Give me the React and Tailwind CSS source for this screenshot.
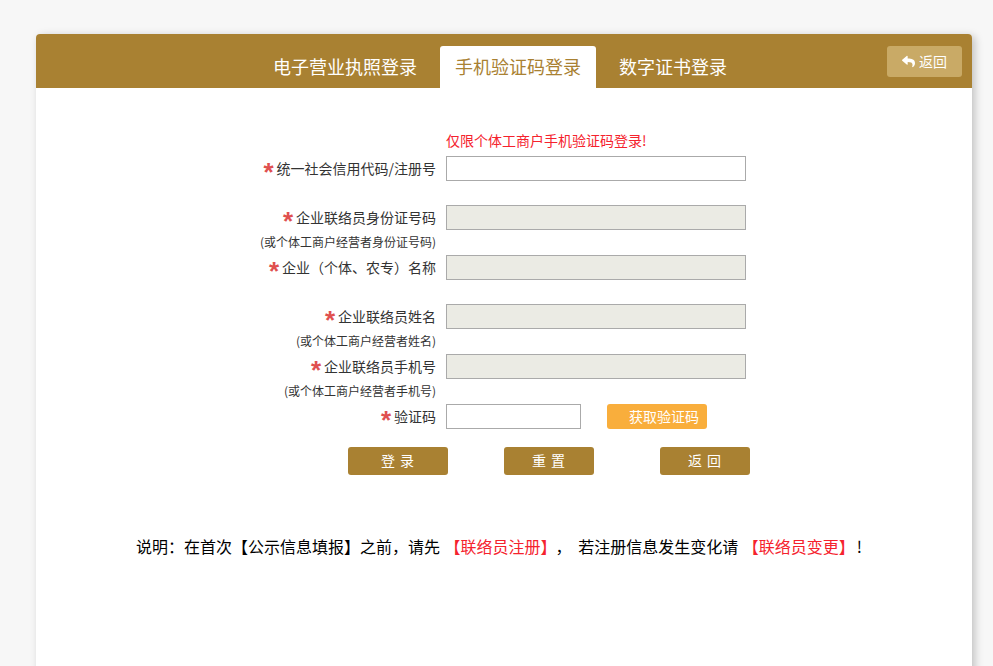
import { FaReply } from "react-icons/fa";

const rows = [
  { label: "统一社会信用代码/注册号", height: "h-[49px]" },
  { label: "企业联络员身份证号码", note: "(或个体工商户经营者身份证号码)", disabled: true, height: "h-[50px]" },
  { label: "企业（个体、农专）名称", disabled: true, height: "h-[49px]" },
  { label: "企业联络员姓名", note: "(或个体工商户经营者姓名)", disabled: true, height: "h-[50px]" },
  { label: "企业联络员手机号", note: "(或个体工商户经营者手机号)", disabled: true, height: "h-[50px]" },
];

const Label = ({ text, note }) => (
  <div className="w-[400px] shrink-0 text-right text-[#333]">
    <div className="flex h-[25px] items-center justify-end text-sm">
      <span className="mr-[3px] mt-[6px] font-['Liberation_Sans',sans-serif] text-[26px] leading-none font-bold text-[#e0504f]">*</span>
      <span className="-mt-[2px]">{text}</span>
    </div>
    {note && <div className="mt-[3px] text-xs leading-[18px]">{note}</div>}
  </div>
);

const FormRow = ({ label, note, disabled, height }) => (
  <div className={`flex gap-[10px] ${height}`}>
    <Label text={label} note={note} />
    <input
      disabled={disabled}
      className={`h-[25px] w-[300px] border border-[#aaa] outline-none ${disabled ? "bg-[#ebebe4]" : "bg-white"}`}
    />
  </div>
);

export default function App() {
  return (
    <div className="h-[666px] overflow-hidden bg-[#f7f7f7] pt-[34px] pl-[36px] font-['Noto_Sans_CJK_SC',sans-serif]">
      <div className="h-[700px] w-[936px] rounded-t-[4px] bg-white shadow-[3px_2px_8px_rgba(0,0,0,0.22)]">
        {/* tabs */}
        <div className="flex h-[54px] items-end rounded-t-[4px] bg-[#a98132] pl-[222px] text-lg text-white">
          <div className="mr-2 flex h-[42px] items-center px-[15px] pb-[2px]">电子营业执照登录</div>
          <div className="mr-2 flex h-[42px] items-center rounded-t-[3px] bg-white px-[15px] pb-[2px] text-[#a98132]">手机验证码登录</div>
          <div className="flex h-[42px] items-center px-[15px] pb-[2px]">数字证书登录</div>
          <button className="mr-[10px] mb-[11px] ml-auto flex h-[31px] w-[75px] items-center justify-center gap-[4px] rounded-[3px] bg-[#c9aa66] pb-px text-sm text-white">
            <FaReply size={13} />
            返回
          </button>
        </div>

        {/* form */}
        <div className="pt-[43px]">
          <div className="ml-[410px] h-[25px] text-sm leading-[18px] text-[#f5222d]">仅限个体工商户手机验证码登录!</div>
          {rows.map((r) => (
            <FormRow key={r.label} {...r} />
          ))}
          <div className="flex gap-[10px]">
            <Label text="验证码" />
            <input className="h-[25px] w-[135px] border border-[#aaa] bg-white outline-none" />
            <button className="ml-4 h-[25px] w-[100px] rounded-[3px] bg-[#f9ae3c] pb-[2px] pl-[14px] text-sm text-white">获取验证码</button>
          </div>
          <div className="mt-[18px] ml-[312px] flex text-sm tracking-[1px] text-white">
            <button className="h-[28px] w-[100px] rounded-[3px] bg-[#a98132] pb-[2px]">登 录</button>
            <button className="ml-[56px] h-[28px] w-[90px] rounded-[3px] bg-[#a98132] pb-[2px]">重 置</button>
            <button className="ml-[66px] h-[28px] w-[90px] rounded-[3px] bg-[#a98132] pb-[2px]">返 回</button>
          </div>
        </div>

        {/* note */}
        <p className="mt-[59px] ml-[100px] text-base leading-[24px] whitespace-pre text-black">
          说明：在首次【公示信息填报】之前，请先 <span className="ml-[1px] text-[#f5222d]">【联络员注册】</span><span className="mr-[3px] ml-[7px]">，</span> 若注册信息发生变化请 <span className="ml-px text-[#f5222d]">【联络员变更】</span><span className="ml-[2px]">!</span>
        </p>
      </div>
    </div>
  );
}
